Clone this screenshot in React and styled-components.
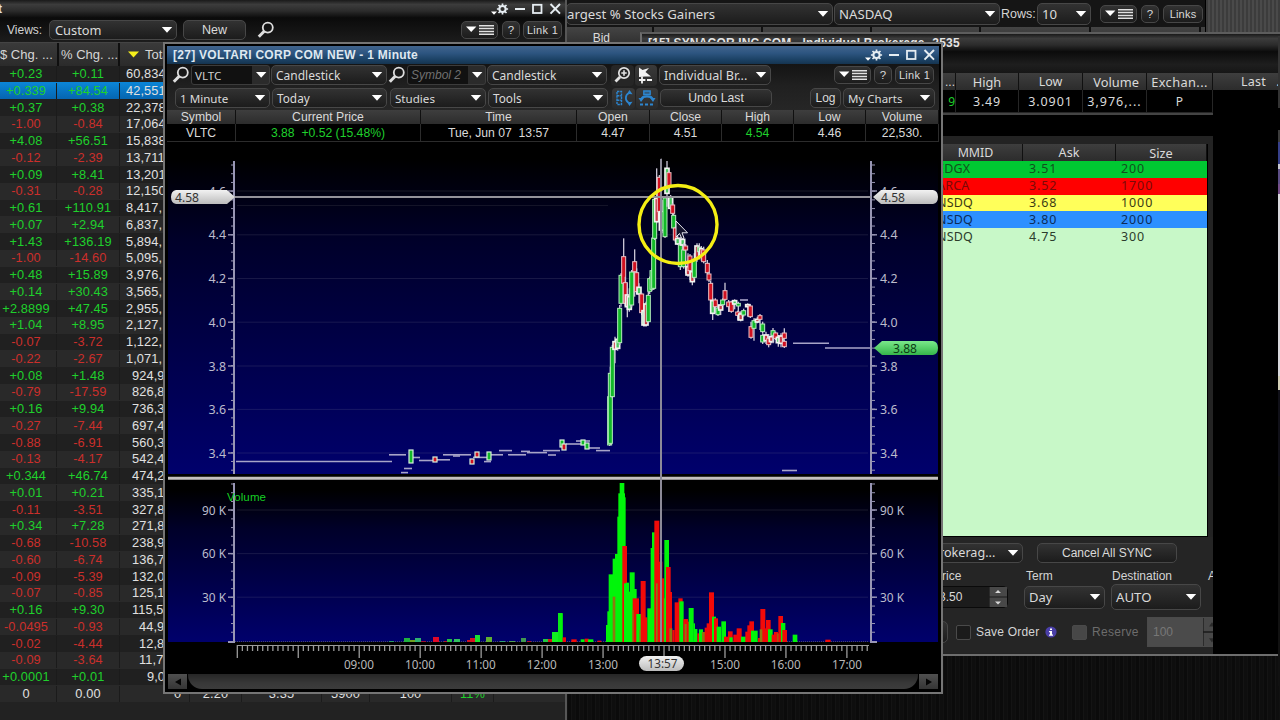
import React from "react";
import styled, { createGlobalStyle, css } from "styled-components";

const Global = createGlobalStyle`
  * { box-sizing: border-box; }
  body { margin: 0; background: #0c0c0c; overflow: hidden; }
`;

const ui = '"Noto Sans", "Open Sans", sans-serif';
const sans = '"Liberation Sans", Arial, sans-serif';

const Desktop = styled.div`
  position: relative;
  width: 1280px;
  height: 720px;
  overflow: hidden;
  background: repeating-linear-gradient(90deg, #0b0b0b 0 3px, #141414 3px 4px, #0e0e0e 4px 7px, #111 7px 8px);
  font-family: ${sans};
  font-size: 12px;
  color: #dcdcdc;
  white-space: nowrap;
`;

const Win = styled.section`
  position: absolute;
  left: ${(p) => p.$x}px;
  top: ${(p) => p.$y}px;
  width: ${(p) => p.$w}px;
  height: ${(p) => p.$h}px;
  overflow: hidden;
  display: flex;
  flex-direction: column;
`;

const ListWin = styled(Win)`
  background: #222;
  border-right: 2px solid #565656;
`;
const GainersWin = styled(Win)`
  background: #161616;
  border-right: 1px solid #000;
`;
const QuoteWin = styled(Win)`
  background: #000;
  border: 2px solid #6e6e6e;
  border-top-color: #5d5d5d;
`;
const ChartWin = styled(Win)`
  background: #000;
  border: 2px solid #757575;
  padding: 2px;
`;
const StripedDesk = styled(Win)`
  background: repeating-linear-gradient(90deg, #3c3c3c 0 2px, #4a4a4a 2px 4px);
`;

const TitleBar = styled.header`
  display: flex;
  align-items: center;
  justify-content: space-between;
  flex: none;
  height: ${(p) => p.$h || 18}px;
  padding: 0 3px 0 6px;
  font-weight: bold;
  font-size: 12px;
  letter-spacing: ${(p) => p.$ls || 0}px;
  color: ${(p) => (p.$active ? "#dfe8f0" : "#e4e4e4")};
  background: ${(p) =>
    p.$active
      ? "linear-gradient(#41648d, #2d5580 40%, #1c4265 75%, #153450)"
      : "linear-gradient(#1a1a1a, #3c3c3c 25%, #2c2c2c 60%, #0a0a0a)"};
`;

const Toolbar = styled.div`
  display: flex;
  align-items: center;
  flex: none;
  height: ${(p) => p.$h}px;
  padding-left: ${(p) => p.$pl || 0}px;
  background: ${(p) => p.$bg || "#191919"};
`;

const control = css`
  display: flex;
  align-items: center;
  flex: none;
  width: ${(p) => p.$w}px;
  height: ${(p) => p.$h || 20}px;
  margin-left: ${(p) => p.$ml || 0}px;
  border: 1px solid #474747;
  border-radius: 5px;
  background: linear-gradient(#323232, #1c1c1c);
  color: #dadada;
  letter-spacing: ${(p) => p.$ls || 0}px;
  font-size: ${(p) => p.$fs || 12}px;
  overflow: hidden;
`;
const SelectBox = styled.div`
  ${control}
  font-family: ${ui};
  justify-content: space-between;
  padding: 0 3px 0 ${(p) => (p.$pl === undefined ? 4 : p.$pl)}px;
`;
const Button = styled.div`
  ${control}
  font-family: ${sans};
  justify-content: center;
`;
const SymbolField = styled.div`
  ${control}
  border-radius: 3px;
  border-color: #3c3c3c;
  background: linear-gradient(90deg, #111 0 60px, #2b2b2b 60px);
  font-family: ${(p) => (p.$hint ? sans : ui)};
  font-style: ${(p) => (p.$hint ? "italic" : "normal")};
  color: ${(p) => (p.$hint ? "#707070" : "#d0d0d0")};
  justify-content: space-between;
  padding: 0 0 0 3px;
`;
const Label = styled.span`
  flex: none;
  width: ${(p) => p.$w}px;
  margin-left: ${(p) => p.$ml || 0}px;
  font-size: ${(p) => p.$fs || 12}px;
  letter-spacing: ${(p) => p.$ls || 0}px;
  color: ${(p) => p.$c || "#d4d4d4"};
`;
const Icon = styled.svg`
  display: block;
  flex: none;
  margin-left: ${(p) => p.$ml || 0}px;
`;

const Arrow = () => (
  <Icon width="12" height="8" viewBox="0 0 12 8">
    <path d="M0.8 1H11.2L6 6.8Z" fill="#fff" />
  </Icon>
);
const Select = ({ children, ...p }) => (
  <SelectBox {...p}>
    <span>{children}</span>
    <Arrow />
  </SelectBox>
);
const Search = ({ ml }) => (
  <Icon $ml={ml} width="18" height="18" viewBox="0 0 18 18" fill="none" stroke="#dedede">
    <circle cx="10.8" cy="6.6" r="5" strokeWidth="1.8" />
    <path d="M7.2 10.2L1.8 15.8" strokeWidth="3" />
  </Icon>
);
const MenuButton = ({ ml, h = 18 }) => (
  <Button $w={37} $h={h} $ml={ml}>
    <svg width="28" height="12" viewBox="0 0 28 12">
      <path d="M0 2.5H10.4L5.2 8Z" fill="#fff" />
      <path d="M13 1.8H28M13 4.6H28M13 7.4H28M13 10.2H28" stroke="#e2e2e2" strokeWidth="1.5" />
    </svg>
  </Button>
);
const WindowIcons = () => (
  <svg width="72" height="18" viewBox="0 0 72 18" fill="none" stroke="#e6edf2">
    <path d="M1 11.5H7L4 14.8Z" fill="#fff" stroke="none" />
    <circle cx="12.5" cy="9" r="3.1" strokeWidth="2" />
    <path
      d="M12.5 3.4V5.5M12.5 12.5V14.6M6.9 9H9M16 9H18.1M8.5 5L10 6.5M15 11.5L16.5 13M16.5 5L15 6.5M10 11.5L8.5 13"
      strokeWidth="1.7"
    />
    <path d="M25 9H35" strokeWidth="2" />
    <rect x="43" y="4.8" width="8.5" height="8.2" strokeWidth="1.8" />
    <path d="M60.5 4L70 13.6M70 4L60.5 13.6" strokeWidth="2" />
  </svg>
);

/* ---------- market list ---------- */
const ListHead = styled.div`
  display: flex;
  flex: none;
  height: 23.7px;
  background: linear-gradient(#3a3a3a, #2b2b2b);
  border-top: 1px solid #444;
`;
const ListHeadCell = styled.div`
  flex: none;
  width: ${(p) => p.$w}px;
  display: flex;
  align-items: center;
  gap: 6px;
  padding-left: ${(p) => p.$pl}px;
  border-right: 2px solid #0f0f0f;
  overflow: hidden;
  font-family: ${sans};
  font-size: 13px;
  color: #d6d6d6;
`;
const ListRow = styled.div`
  display: flex;
  align-items: center;
  flex: none;
  height: 16.757px;
  background: ${(p) => (p.$sel ? "linear-gradient(#0b86d8, #0565b0)" : p.$odd ? "#292929" : "#202020")};
  font-size: 12.8px;
  line-height: 16px;
  letter-spacing: 0.1px;
`;
const ListCell = styled.div`
  flex: none;
  width: ${(p) => p.$w}px;
  text-align: ${(p) => (p.$pl === undefined ? "center" : "left")};
  text-indent: ${(p) => p.$shift || 0}px;
  padding-left: ${(p) => p.$pl || 0}px;
  border-right: 1px solid #1b1b1b;
  color: ${(p) => (p.$dir === "up" ? "#1fd02c" : p.$dir === "down" ? "#cb2f2b" : "#e0e0e0")};
`;

const rows = [
  ["+0.23", "+0.11", "60,834"], ["+0.339", "+84.54", "42,551"], ["+0.37", "+0.38", "22,378"],
  ["-1.00", "-0.84", "17,064"], ["+4.08", "+56.51", "15,838"], ["-0.12", "-2.39", "13,711"],
  ["+0.09", "+8.41", "13,201"], ["-0.31", "-0.28", "12,150"], ["+0.61", "+110.91", "8,417,"],
  ["+0.07", "+2.94", "6,837,"], ["+1.43", "+136.19", "5,894,"], ["-1.00", "-14.60", "5,095,"],
  ["+0.48", "+15.89", "3,976,"], ["+0.14", "+30.43", "3,565,"], ["+2.8899", "+47.45", "2,955,"],
  ["+1.04", "+8.95", "2,127,"], ["-0.07", "-3.72", "1,122,"], ["-0.22", "-2.67", "1,071,"],
  ["+0.08", "+1.48", "924,9", 6], ["-0.79", "-17.59", "826,8", 6], ["+0.16", "+9.94", "736,3", 6],
  ["-0.27", "-7.44", "697,4", 6], ["-0.88", "-6.91", "560,3", 6], ["-0.13", "-4.17", "542,4", 6],
  ["+0.344", "+46.74", "474,2", 6], ["+0.01", "+0.21", "335,1", 6], ["-0.11", "-3.51", "327,8", 6],
  ["+0.34", "+7.28", "271,8", 6], ["-0.68", "-10.58", "238,9", 6], ["-0.60", "-6.74", "136,7", 6],
  ["-0.09", "-5.39", "132,0", 6], ["-0.07", "-0.85", "125,1", 6], ["+0.16", "+9.30", "115,5", 6],
  ["-0.0495", "-0.93", "44,9", 13], ["-0.02", "-4.44", "12,8", 13], ["-0.09", "-3.64", "11,7", 13],
  ["+0.0001", "+0.01", "9,0", 21],
];
const dir = (s) => (s[0] === "+" ? "up" : "down");

const MarketList = () => (
  <ListWin $x={0} $y={0} $w={567} $h={720}>
    <TitleBar $h={18}>
      <span style={{ marginLeft: -8 }}>t</span>
      <WindowIcons />
    </TitleBar>
    <Toolbar $h={24} $pl={7} $bg="linear-gradient(#0b0b0b, #1c1c1c)">
      <Label $w={36}>Views:</Label>
      <Select $w={128} $ml={6} $h={20} $fs={12.8} $pl={5}>Custom</Select>
      <Button $w={63} $ml={6} $h={20} $fs={12.5}>New</Button>
      <Search ml={11} />
      <MenuButton ml={186} />
      <Button $w={18} $h={18} $ml={4} $fs={11.5}>?</Button>
      <Button $w={39} $h={18} $ml={3} $fs={11} $ls={0.3}>Link 1</Button>
    </Toolbar>
    <ListHead>
      <ListHeadCell $w={59} $pl={-1}>$ Chg. ...</ListHeadCell>
      <ListHeadCell $w={61} $pl={2}>% Chg. ...</ListHeadCell>
      <ListHeadCell $w={447} $pl={8}>
        <svg width="11" height="7" viewBox="0 0 11 7"><path d="M0 0.5H11L5.5 6.5Z" fill="#f4ee1c" /></svg>
        Total Vol
      </ListHeadCell>
    </ListHead>
    {rows.map((r, i) => (
      <ListRow key={i} $sel={i === 1} $odd={i % 2 === 1}>
        <ListCell $w={57} $dir={dir(r[0])} $shift={-4}>{r[0]}</ListCell>
        <ListCell $w={63} $dir={dir(r[1])}>{r[1]}</ListCell>
        <ListCell $w={200} $pl={6 + (r[3] || 0)}>{r[2]}</ListCell>
      </ListRow>
    ))}
    <ListRow $odd>
      <ListCell $w={57} $shift={-4}>0</ListCell>
      <ListCell $w={63}>0.00</ListCell>
      <ListCell $w={70} $pl={54}>0</ListCell>
      <ListCell $w={52}>2.20</ListCell>
      <ListCell $w={80}>3.35</ListCell>
      <ListCell $w={48}>5900</ListCell>
      <ListCell $w={82}>100</ListCell>
      <ListCell $w={42} $dir="up">11%</ListCell>
    </ListRow>
  </ListWin>
);

/* ---------- gainers ---------- */
const HeadStrip = styled.div`
  display: flex;
  flex: none;
  height: 17px;
  background: linear-gradient(#444, #303030);
`;
const StripCell = styled.div`
  flex: none;
  width: ${(p) => p.$w}px;
  border-right: 2px solid #111;
  padding-top: 4px;
  padding-right: 42px;
  text-align: right;
`;
const Gainers = () => (
  <GainersWin $x={567} $y={0} $w={639} $h={400}>
    <Toolbar $h={27} $bg="#151515">
      <Select $w={267} $ml={-1} $h={22} $pl={0} $fs={13.2}>argest % Stocks Gainers</Select>
      <Select $w={166} $ml={1} $h={22} $fs={13.2}>NASDAQ</Select>
      <Label $w={35} $ml={1} $fs={12.5}>Rows:</Label>
      <Select $w={54} $ml={1} $h={22} $fs={13.2}>10</Select>
      <MenuButton ml={9} />
      <Button $w={18} $h={18} $ml={4} $fs={11.5}>?</Button>
      <Button $w={40} $h={18} $ml={4} $fs={11} $ls={0.2}>Links</Button>
    </Toolbar>
    <HeadStrip>
      <StripCell $w={87}>Bid</StripCell>
      <StripCell $w={109} /><StripCell $w={109} /><StripCell $w={109} /><StripCell $w={110} /><StripCell $w={110} />
    </HeadStrip>
  </GainersWin>
);

/* ---------- quote / level 2 ---------- */
const GridHead = styled.div`
  display: flex;
  flex: none;
  height: ${(p) => p.$h}px;
  background: linear-gradient(#3e3e3e, #2c2c2c);
`;
const GridVals = styled.div`
  display: flex;
  flex: none;
  height: ${(p) => p.$h}px;
  background: #000;
`;
const GridCell = styled.div`
  flex: none;
  width: ${(p) => p.$w}px;
  display: flex;
  align-items: center;
  justify-content: ${(p) => p.$j || "center"};
  border-right: 1px solid ${(p) => (p.$line ? p.$line : "#101010")};
  border-bottom: ${(p) => (p.$line ? `1px solid ${p.$line}` : "0")};
  font-family: ${(p) => (p.$ui ? ui : sans)};
  font-size: ${(p) => p.$fs || 12}px;
  letter-spacing: ${(p) => p.$ls || 0}px;
  padding-left: ${(p) => p.$pl || 0}px;
  color: ${(p) => (p.$up ? "#1fcf2c" : "#dadada")};
  white-space: pre;
`;
const QuoteBody = styled.div`
  flex: none;
  width: 571px;
  height: 541px;
  border-top: 2px solid #444;
  background: #232323;
`;
const BlackBand = styled.div`
  height: 21px;
  background: #000;
`;
const Level2 = styled.div`
  width: 566px;
  height: 393px;
  margin-top: 8px;
  border-right: 1px solid #000;
  border-bottom: 1px solid #000;
  background: #c8f8c8;
`;
const L2Row = styled.div`
  display: flex;
  align-items: center;
  height: 16.8px;
  padding-left: 295px;
  background: ${(p) => p.$bg};
  color: ${(p) => p.$fg};
  font-family: ${ui};
  font-size: 12.5px;
  line-height: 16px;
`;
const L2Cell = styled.span`
  flex: none;
  width: 92px;
  letter-spacing: ${(p) => (p.$name ? 0.2 : 0.9)}px;
`;
const Form = styled.div`
  height: 116px;
  display: flex;
  flex-direction: column;
  background: #252525;
  overflow: hidden;
`;
const FormRow = styled.div`
  display: flex;
  align-items: center;
  flex: none;
  height: ${(p) => p.$h}px;
  padding-left: ${(p) => p.$pl}px;
`;
const Spinner = styled.div`
  display: flex;
  justify-content: space-between;
  align-items: center;
  flex: none;
  width: ${(p) => p.$w}px;
  height: ${(p) => p.$h}px;
  padding-left: ${(p) => p.$pl}px;
  border: 1px solid ${(p) => (p.$off ? "#4a4a4a" : "#0a0a0a")};
  border-radius: ${(p) => (p.$off ? 0 : 5)}px;
  background: ${(p) => (p.$off ? "#4b4b4b" : "#1c1c1c")};
  color: ${(p) => (p.$off ? "#777" : "#dadada")};
`;
const Check = styled.div`
  flex: none;
  width: 15px;
  height: 15px;
  margin-left: ${(p) => p.$ml || 0}px;
  border: 1px solid #4a4a4a;
  border-radius: 2px;
  background: ${(p) => (p.$off ? "#474747" : "#1b1b1b")};
`;
const SpinArrows = ({ h, off }) => (
  <svg width="18" height={h} viewBox="0 0 18 20" preserveAspectRatio="none">
    <rect width="18" height="20" fill="#484848" />
    <path d="M0 10H18M0 0V20" stroke="#1a1a1a" strokeWidth="1.2" />
    <path d="M6 6H12L9 3ZM6 14.5H12L9 17.5Z" fill={off ? "#2a2a2a" : "#d8d8d8"} />
  </svg>
);

const l2 = [
  ["EDGX", "3.51", "200", "#00c832", "#12501c"],
  ["ARCA", "3.52", "1700", "#ff0000", "#7a0a08"],
  ["NSDQ", "3.68", "1000", "#ffff5a", "#3c3c14"],
  ["NSDQ", "3.80", "2000", "#2d90ff", "#0c2c58"],
  ["NSDQ", "4.75", "300", "#c8f8c8", "#2c3c2c"],
];

const Quote = () => (
  <QuoteWin $x={640} $y={32} $w={660} $h={624}>
    <TitleBar $h={18} $ls={0.17}>
      <span>[15] SYNACOR INC COM - Individual Brokerage -2535</span>
    </TitleBar>
    <Toolbar $h={21} $bg="linear-gradient(#0c0c0c, #1e1e1e 60%, #161616)" />
    <GridHead $h={17}>
      <GridCell $w={314} $j="flex-end">...</GridCell>
      <GridCell $w={63} $ui $fs={12.8}>High</GridCell>
      <GridCell $w={64} $ui $fs={12.5}>Low</GridCell>
      <GridCell $w={64} $ui $fs={12.8}>{" Volume"}</GridCell>
      <GridCell $w={66} $ui $fs={12.8} $ls={0.4}>Exchan...</GridCell>
      <GridCell $w={85} $ui $fs={12.5} $ls={0.2} $j="flex-start" $pl={28}>{"Last   ."}</GridCell>
    </GridHead>
    <GridVals $h={23}>
      <GridCell $w={314} $ui $j="flex-end" $up $line="#262626">9</GridCell>
      <GridCell $w={63} $ui $fs={12.5} $ls={0.8} $line="#262626">3.49</GridCell>
      <GridCell $w={64} $ui $fs={12.5} $ls={0.9} $line="#262626">3.0901</GridCell>
      <GridCell $w={64} $ui $fs={12.5} $ls={1} $line="#262626">3,976,...</GridCell>
      <GridCell $w={66} $ui $line="#262626">P</GridCell>
    </GridVals>
    <QuoteBody>
      <BlackBand />
      <Level2>
        <GridHead $h={17}>
          <GridCell $w={381} $ui $fs={12.4} $pl={287}>MMID</GridCell>
          <GridCell $w={93} $ui $fs={12.6}>Ask</GridCell>
          <GridCell $w={91} $ui $fs={12.8}>{"Size"}</GridCell>
        </GridHead>
        {l2.map((r, i) => (
          <L2Row key={i} $bg={r[3]} $fg={r[4]}>
            <L2Cell $name>{r[0]}</L2Cell>
            <L2Cell>{r[1]}</L2Cell>
            <L2Cell>{r[2]}</L2Cell>
          </L2Row>
        ))}
      </Level2>
      <Form>
        <FormRow $h={31} $pl={252}>
          <Select $w={129} $h={20} $pl={44} $fs={12.6}>rokerag...</Select>
          <Button $w={140} $h={20} $ml={14}>Cancel All SYNC</Button>
        </FormRow>
        <FormRow $h={15} $pl={292}>
          <Label $w={92}>Price</Label>
          <Label $w={86}>Term</Label>
          <Label $w={96}>Destination</Label>
          <Label $w={40}>Account</Label>
        </FormRow>
        <FormRow $h={28} $pl={284}>
          <Spinner $w={82} $h={22} $pl={12}>3.50<SpinArrows h={20} /></Spinner>
          <Select $w={81} $h={23} $ml={16} $fs={13}>Day</Select>
          <Select $w={90} $h={26} $ml={6} $fs={13.2}>AUTO</Select>
        </FormRow>
        <FormRow $h={42} $pl={285}>
          <Button $w={21} $h={22} />
          <Check $ml={8} />
          <Label $w={63} $ml={5} $ls={0.2}>Save Order</Label>
          <Icon $ml={6} width="12" height="12" viewBox="0 0 12 12">
            <circle cx="6" cy="6" r="5.6" fill="#4a3fa8" />
            <path d="M5 2.5H7V4H5ZM4 5H7V8.6H8V9.8H4V8.6H5V6.2H4Z" fill="#fff" />
          </Icon>
          <Check $off $ml={15} />
          <Label $w={55} $ml={5} $c="#6c6c6c" $ls={0.3}>Reserve</Label>
          <Spinner $off $w={75} $h={30} $pl={5}>100<SpinArrows h={28} off /></Spinner>
        </FormRow>
      </Form>
    </QuoteBody>
  </QuoteWin>
);

const EdgeSlice = styled(Win)`
  background: linear-gradient(#333 0 72px, #000 72px 94px, #3c3c3c 94px 106px, #37408a 106px 128px, #c9c9d2 128px 133px, #5d4f86 133px 148px, #77508a 148px 158px, #d8d8dc 158px 340px, #d4d0b8 340px 354px, #101018 354px 440px, #111 440px);
`;

/* ---------- chart ---------- */
const AXIS = "#9896b4";
const ticks = (from, to, step) => {
  const out = [];
  for (let v = from; v <= to + 0.01; v += step) out.push(v);
  return out;
};
const price = [["4.6", 191], ["4.4", 234.8], ["4.2", 278.5], ["4.0", 322.2], ["3.8", 366], ["3.6", 409.4], ["3.4", 453]];
const vol = [["90 K", 510], ["60 K", 553.6], ["30 K", 597.2]];
const times = [["09:00", 358.9], ["10:00", 420], ["11:00", 480.8], ["12:00", 541.8], ["13:00", 603], ["15:00", 725], ["16:00", 785.8], ["17:00", 847]];

/* centre, wick top, body top, body bottom, wick bottom, colour; tripled scale */
const candles = [
  [149, 700, 740, 885, 888, "g"], [151, 650, 670, 880, 885, "g"], [157, 585, 592, 740, 745, "g"], [165, 560, 575, 598, 640, "w"], [173, 560, 568, 595, 602, "w"],
  [179, 465, 475, 578, 585, "g"], [183, 370, 376, 460, 470, "g"], [191, 265, 320, 400, 405, "r"],
  [196, 380, 398, 460, 468, "r"], [202, 400, 435, 470, 502, "w"], [208, 415, 440, 478, 485, "w"],
  [215, 360, 366, 465, 472, "g"], [224, 298, 335, 365, 440, "r"], [230, 355, 368, 425, 432, "r"],
  [237, 400, 412, 432, 460, "w"], [245, 428, 432, 488, 495, "r"], [252, 465, 482, 525, 530, "w"],
  [258, 455, 462, 525, 530, "w"], [265, 425, 436, 515, 520, "g"], [269, 380, 386, 424, 432, "g"],
  [276, 355, 362, 418, 422, "g"], [281, 258, 264, 415, 418, "g"], [284, 140, 148, 265, 270, "g"],
  [290, 55, 145, 215, 220, "w"], [298, 75, 82, 185, 190, "r"], [304, 26, 185, 240, 300, "w"],
  [309, 150, 185, 240, 250, "g"], [315, 138, 144, 260, 264, "g"], [321, 33, 55, 130, 170, "w"],
  [327, 60, 68, 110, 124, "r"], [332, 135, 142, 175, 180, "w"], [338, 160, 165, 190, 200, "r"],
  [341, 190, 196, 234, 238, "g"], [346, 230, 234, 270, 275, "r"], [353, 255, 265, 282, 285, "w"],
  [361, 262, 285, 350, 360, "g"], [368, 262, 268, 285, 350, "w"], [371, 280, 300, 350, 356, "g"],
  [377, 282, 288, 300, 370, "r"], [384, 310, 350, 375, 380, "w"], [390, 312, 318, 362, 390, "r"],
  [397, 330, 365, 395, 406, "w"], [403, 310, 330, 382, 388, "g"], [411, 280, 288, 325, 335, "w"],
  [418, 280, 292, 305, 328, "g"], [424, 288, 296, 318, 332, "w"], [431, 290, 300, 335, 340, "r"],
  [442, 330, 340, 368, 372, "r"], [447, 365, 372, 390, 396, "r"], [452, 392, 400, 450, 470, "r"],
  [458, 445, 452, 490, 510, "w"], [466, 445, 450, 470, 490, "r"], [474, 468, 474, 494, 498, "g"],
  [482, 460, 465, 480, 495, "w"], [488, 445, 450, 464, 468, "g"], [495, 398, 422, 448, 452, "r"],
  [506, 450, 456, 470, 486, "r"], [514, 452, 456, 484, 488, "r"], [524, 448, 452, 462, 478, "w"],
  [535, 455, 460, 468, 500, "g"], [533, 482, 486, 496, 512, "r"], [542, 484, 492, 510, 514, "w"],
  [551, 476, 482, 495, 500, "g"], [563, 460, 464, 470, 500, "w"], [571, 462, 468, 500, 504, "r"],
  [573, 515, 530, 562, 566, "r"], [582, 505, 512, 535, 572, "g"], [592, 500, 508, 516, 520, "w"],
  [600, 492, 497, 508, 540, "r"], [608, 515, 522, 545, 550, "g"], [608, 550, 556, 576, 582, "g"],
  [618, 545, 555, 572, 582, "w"], [626, 552, 566, 584, 592, "r"], [634, 550, 560, 575, 580, "w"],
  [639, 534, 542, 556, 580, "g"], [647, 545, 549, 566, 570, "r"], [655, 555, 562, 578, 590, "w"],
  [663, 550, 558, 580, 592, "w"], [673, 535, 549, 565, 568, "r"], [673, 568, 574, 590, 594, "r"],
];
const fills = { g: "#12b828", r: "#d01020" };

/* left, top, width, colour; tripled scale, baseline 605 */
const bars = [
  [0, 520, 8, "g"], [8, 592, 10, "r"], [34, 598, 16, "r"], [62, 598, 12, "g"], [74, 596, 12, "r"], [84, 598, 16, "g"], [112, 602, 12, "r"],
  [138, 555, 8, "g"], [142, 514, 8, "g"], [146, 403, 14, "g"], [158, 356, 12, "g"], [165, 342, 12, "g"],
  [172, 230, 10, "g"], [175, 160, 20, "g"], [179, 129, 14, "g"], [192, 172, 5, "g"], [158, 470, 8, "o"], [187, 318, 14, "r"],
  [192, 430, 13, "g"], [198, 428, 9, "g"], [204, 455, 22, "g"], [209, 397, 15, "g"], [222, 447, 8, "g"],
  [218, 475, 19, "r"], [216, 510, 5, "o"], [229, 522, 14, "g"], [242, 423, 15, "r"], [238, 570, 5, "o"], [255, 532, 7, "r"],
  [262, 505, 20, "g"], [272, 324, 10, "g"], [276, 277, 12, "g"], [283, 242, 15, "r"], [288, 430, 5, "o"],
  [297, 365, 10, "r"], [305, 415, 7, "r"], [311, 475, 5, "o"], [313, 300, 14, "g"], [318, 381, 14, "r"], [328, 456, 8, "r"],
  [328, 565, 9, "o"], [337, 570, 7, "r"], [344, 487, 14, "r"], [355, 475, 13, "r"], [358, 484, 13, "g"], [370, 537, 14, "r"],
  [374, 552, 6, "o"], [382, 545, 5, "r"], [386, 504, 15, "g"], [400, 550, 5, "g"], [405, 567, 7, "g"], [412, 580, 6, "r"], [417, 568, 12, "g"],
  [426, 576, 12, "o"], [434, 563, 8, "r"], [440, 550, 8, "r"], [447, 457, 15, "r"], [456, 530, 12, "g"], [462, 535, 12, "r"],
  [470, 560, 13, "g"], [484, 544, 14, "g"], [492, 590, 12, "r"], [504, 574, 14, "r"], [508, 592, 10, "g"], [520, 584, 12, "r"],
  [530, 565, 15, "r"], [543, 590, 15, "g"], [556, 575, 8, "r"], [562, 556, 8, "r"], [568, 544, 14, "r"], [573, 572, 20, "g"],
  [594, 594, 6, "r"], [601, 507, 15, "r"], [599, 568, 8, "o"], [615, 565, 5, "r"], [618, 540, 14, "r"], [624, 568, 14, "g"], [635, 584, 10, "r"],
  [642, 576, 12, "r"], [652, 580, 8, "o"], [655, 528, 14, "r"], [663, 549, 13, "g"], [667, 570, 14, "r"], [698, 584, 14, "g"], [796, 599, 16, "r"],
];
const barFill = { g: "#00f50a", r: "#f20a08", o: "#8c7a10" };

/* left, width, height, colour of the small morning bars */
const early = [
  [389, 5, 1, "#2a9a60"], [404, 6, 4, "#20b040"], [410, 5, 2, "#6fa020"], [415, 6, 4, "#30b070"], [421, 5, 1, "#a01030"],
  [433, 6, 5, "#e00828"], [444, 3, 1, "#b01030"], [447, 5, 3, "#20c040"], [454, 6, 3, "#30c060"], [467, 3, 2, "#d01020"],
  [470, 5, 4, "#d81020"], [475, 5, 7, "#18e030"], [486, 6, 5, "#60b030"], [500, 5, 1, "#30a070"], [509, 6, 1, "#50a050"],
  [521, 5, 4, "#409850"], [527, 4, 1, "#b01030"], [543, 5, 3, "#20c840"], [548, 4, 3, "#d01818"], [552, 6, 10, "#10f020"], [558, 4.5, 29, "#08e818"],
];
const dashes = [
  [236, 392, 461.5], [389, 406, 454.8], [404, 412, 468.5], [401, 408, 472.6], [412, 420, 457.5], [419, 434, 460.5],
  [437, 450, 459.8], [443, 471, 454.8], [453, 460, 456], [473, 488, 457.4], [484, 491, 461.6], [490, 503, 454.8], [499, 512, 450.6],
  [508, 526, 454.8], [521, 530, 451.4], [527, 547, 452.6], [543, 560, 450.6], [548, 556, 455], [566, 582, 444], [576, 590, 441],
  [586, 600, 448], [596, 610, 450.6], [740, 748, 300], [793, 829, 343.3], [825, 870, 348], [782, 797, 470.5],
];
const small = [[411, 450, 13, "g"], [435, 457, 5, "r"], [472, 459, 5, "r"], [477, 452, 5, "r"], [489, 452, 8, "g"], [562, 440, 7, "g"], [564, 444, 6, "r"], [583, 440, 5, "g"], [587, 443, 6, "g"]];

const Chart = () => (
  <Icon as="svg" width="772" height="531" viewBox="167 142 772 531" fontFamily={ui} fontSize="12">
    <defs>
      <linearGradient id="pane" x1="0" y1="0" x2="0" y2="1">
        <stop offset="0.05" stopColor="#000" />
        <stop offset="0.3" stopColor="#00002a" />
        <stop offset="1" stopColor="#00006c" />
      </linearGradient>
      <linearGradient id="tag" x1="0" y1="0" x2="0" y2="1">
        <stop offset="0" stopColor="#f2f2f2" /><stop offset="1" stopColor="#bcbcbc" />
      </linearGradient>
      <linearGradient id="tagG" x1="0" y1="0" x2="0" y2="1">
        <stop offset="0" stopColor="#7ae88a" /><stop offset="1" stopColor="#35b64a" />
      </linearGradient>
    </defs>
    <rect x="167" y="142" width="772" height="531" fill="#000" />
    <rect x="168" y="142" width="770" height="332" fill="url(#pane)" />
    <rect x="168" y="482" width="770" height="160" fill="url(#pane)" />
    {[...price, ...vol].map(([t, y]) => (
      <path key={t} d={`M237 ${y}H868`} stroke="#9090a0" strokeOpacity="0.17" />
    ))}
    <path d="M237 205.5H608" stroke="#888" strokeOpacity="0.15" />
    <path d="M168 478.3H938" stroke="#c4c0c0" strokeWidth="3" />
    {[234, 871].map((x, k) => {
      const s = k ? 1 : -1;
      return (
        <g key={x} stroke={AXIS}>
          <path d={`M${x} 161V474M${x} 483V642h${s * 6}`} strokeWidth="2" fill="none" />
          {ticks(165, 473, 8.72).map((y) => <path key={y} d={`M${x} ${y}h${k ? 4 : -3}`} />)}
          {ticks(484, 640, 8.72).map((y) => <path key={y} d={`M${x} ${y}h${k ? 4 : -3}`} />)}
          {[...price, ...vol].map(([t, y]) => (
            <g key={t}>
              <path d={`M${x} ${y}h${s * 6}`} strokeWidth="1.4" />
              <text x={k ? 880 : 226} y={y + 4.5} textAnchor={k ? "start" : "end"} fill="#bcbccc" stroke="none" textLength={t.length > 3 ? 24 : 17.5} lengthAdjust="spacingAndGlyphs">{t}</text>
            </g>
          ))}
        </g>
      );
    })}
    <g stroke="#a8a4c8" strokeWidth="1.6">
      {dashes.map(([a, b, y]) => <path key={`${a}-${y}`} d={`M${a} ${y}H${b}`} />)}
    </g>
    {small.map(([x, y, h, c]) => (
      <rect key={x} x={x - 2} y={y} width="4" height={h} fill={fills[c]} stroke="#d8f0dc" strokeWidth="1.2" />
    ))}
    <g transform="translate(560 150) scale(0.33333)">
      {candles.map(([x, a, b, c, d, k], i) => (
        <g key={i}>
          <path d={`M${x} ${a}V${d}`} stroke="#c8c4d4" strokeWidth="4" />
          <rect x={x - 6} y={b} width="12" height={c - b} fill={k === "w" ? (i % 2 ? "#c83a48" : "#48c860") : fills[k]} stroke={k === "r" ? "#ecc0c4" : k === "g" ? "#b4ecbc" : "#f0f4f0"} strokeWidth={k === "w" ? 5 : 3} />
        </g>
      ))}
    </g>
    <path d="M235 641.5H868" stroke="#44446a" strokeDasharray="1 1" />
    {early.map(([x, w, h, c]) => <rect key={x} x={x} y={642 - h} width={w} height={h} fill={c} />)}
    <g transform="translate(560 440) scale(0.33333)">
      {bars.map(([x, y, w, c], i) => <rect key={i} x={x} y={y} width={w} height={606 - y} fill={barFill[c]} />)}
    </g>
    <text x="227" y="501" fill="#16cf22" fontFamily={sans} fontSize="11.5" textLength="39">Volume</text>
    <path d="M661 159V642" stroke="#8c8a98" strokeWidth="2" />
    <path d="M234 197H871" stroke="#94929a" strokeWidth="2" />

    <g stroke="#9c9c9c">
      <path d="M237 645.5H869" />
      {ticks(0, 124, 1).map((n) => (
        <path key={n} d={`M${237.3 + n * 5.08} 645V${n % 12 ? 651 : 658}`} strokeWidth="1.3" />
      ))}
    </g>
    {times.map(([t, x]) => (
      <text key={t} x={x} y="668.5" textAnchor="middle" fill="#b8b8b8" textLength="30" lengthAdjust="spacingAndGlyphs">{t}</text>
    ))}
    <rect x="639" y="656" width="45" height="15" rx="7.5" fill="url(#tag)" />
    <text x="662.5" y="668" textAnchor="middle" fill="#333" textLength="30" lengthAdjust="spacingAndGlyphs">13:57</text>

    <path d="M176 190H227L235 197L227 204H176Q171 203 171 197Q171 191 176 190Z" fill="url(#tag)" />
    <text x="175" y="201.5" fill="#333" textLength="24" lengthAdjust="spacingAndGlyphs">4.58</text>
    <path d="M933 190H881L873 197L881 204H933Q938 203 938 197Q938 191 933 190Z" fill="url(#tag)" />
    <text x="881" y="201.5" fill="#333" textLength="24" lengthAdjust="spacingAndGlyphs">4.58</text>
    <path d="M933 341H882L874 348L882 355H933Q938 354 938 348Q938 342 933 341Z" fill="url(#tagG)" />
    <text x="893" y="352.5" fill="#0c3c14" textLength="24" lengthAdjust="spacingAndGlyphs">3.88</text>

    <circle cx="678" cy="224.5" r="39" fill="none" stroke="#f4ee14" strokeWidth="3.4" />
    <path d="M676 221V237L679.5 233.5L682 239L684 238L682 232.8H687.5Z" fill="#14142c" stroke="#e8e8f0" strokeWidth="1" />
  </Icon>
);

const ScrollBar = styled.div`
  display: flex;
  align-items: stretch;
  flex: none;
  height: 17px;
  padding: 1px;
  background: #000;
`;
const ScrollTrack = styled.div`
  flex: 1;
  margin: 0 1px;
  border-radius: 0 0 14px 14px;
  background: linear-gradient(#262626, #383838 60%, #3c3c3c);
`;
const ScrollButton = styled.div`
  width: 19px;
  display: flex;
  align-items: center;
  justify-content: center;
  background: linear-gradient(#505050, #353535);
`;
const ToolIcon = styled.div`
  display: flex;
  align-items: center;
  justify-content: center;
  flex: none;
  width: ${(p) => p.$w}px;
  height: 21px;
  margin-left: ${(p) => p.$ml || 0}px;
  border-radius: 4px;
  background: ${(p) => (p.$on ? "linear-gradient(#3a3a3a, #2a2a2a)" : "#262626")};
`;

const cols = [69, 185, 156, 73, 72, 72, 72, 73];
const heads = ["Symbol", "Current Price", "Time", "Open", "Close", "High", "Low", "Volume"];
const vals = ["VLTC", "3.88  +0.52 (15.48%)", "Tue, Jun 07  13:57", "4.47", "4.51", "4.54", "4.46", "22,530."];

const ChartWindow = () => (
  <ChartWin $x={163} $y={42} $w={780} $h={652}>
    <TitleBar $active $ls={0.27}>
      <span>[27] VOLTARI CORP COM NEW - 1 Minute</span>
      <WindowIcons />
    </TitleBar>
    <Toolbar $h={22} $pl={5} $bg="linear-gradient(#141414, #202020)">
      <Search ml={0} />
      <SymbolField $w={79} $ml={1} $fs={11.6}><span>VLTC</span><Icon width="14" height="8" viewBox="0 0 14 8"><path d="M1 1H11.4L6.2 6.8Z" fill="#fff" /></Icon></SymbolField>
      <Select $w={116} $ml={1}>Candlestick</Select>
      <Search ml={1} />
      <SymbolField $w={79} $ml={1} $hint $fs={12}><span>Symbol 2</span><Icon width="14" height="8" viewBox="0 0 14 8"><path d="M1 1H11.4L6.2 6.8Z" fill="#fff" /></Icon></SymbolField>
      <Select $w={120} $ml={1}>Candlestick</Select>
      <ToolIcon $w={23} $ml={4}>
        <svg width="18" height="18" viewBox="0 0 18 18" fill="none" stroke="#e2e2e2">
          <circle cx="10" cy="7" r="5.2" strokeWidth="1.7" />
          <path d="M6 11L1.5 15.5" strokeWidth="2.8" />
          <path d="M7.3 7H12.7M10 4.3V9.7" strokeWidth="1.6" />
        </svg>
      </ToolIcon>
      <ToolIcon $w={22} $ml={1} $on>
        <svg width="18" height="18" viewBox="0 0 18 18">
          <path d="M2 1.5L5.5 4L12 2L8.5 6L14 10.5H8L2 11Z" fill="#f2f2f2" />
          <path d="M5 10.5V17.5M2 14H8.4M10 14H15" stroke="#f2f2f2" strokeWidth="1.8" />
        </svg>
      </ToolIcon>
      <Select $w={112} $ml={2} $fs={12.6}>Individual Br...</Select>
      <MenuButton ml={63} />
      <Button $w={18} $h={18} $ml={3} $fs={11.5}>?</Button>
      <Button $w={39} $h={18} $ml={3} $fs={11} $ls={0.3}>Link 1</Button>
    </Toolbar>
    <Toolbar $h={24} $pl={8} $bg="linear-gradient(#202020, #262626)">
      <Select $w={95} $fs={11.6}>1 Minute</Select>
      <Select $w={115} $ml={2} $fs={11.8}>Today</Select>
      <Select $w={96} $ml={3} $fs={11.6}>Studies</Select>
      <Select $w={120} $ml={2} $fs={11.8}>Tools</Select>
      <ToolIcon $w={23} $ml={4} $on>
        <svg width="18" height="18" viewBox="0 0 18 18" fill="none" stroke="#2c86d0" strokeWidth="1.4">
          <path d="M2 2.5H6.5V15.5H2ZM2 6.8H6.5M2 11.2H6.5" strokeDasharray="2.4 0.8" />
          <path d="M13.5 4.5C10 6 10 12 13.5 13.5" strokeWidth="1.8" />
          <path d="M12 4.8L14.5 1L17.5 5.2ZM12 13.2L14.5 17L17.5 12.8Z" fill="#2c86d0" stroke="none" />
        </svg>
      </ToolIcon>
      <ToolIcon $w={22} $ml={1} $on>
        <svg width="18" height="18" viewBox="0 0 18 18" fill="none" stroke="#2c86d0" strokeWidth="1.4">
          <path d="M3.5 10C4.5 6.5 13.5 6.5 14.5 10" strokeWidth="2.2" />
          <path d="M5.8 2H12.2V5.5H5.8Z" fill="#2c86d0" fillOpacity="0.45" />
          <path d="M0.5 9H6L3 13ZM12 9H17.5L15 13Z" fill="#2c86d0" stroke="none" />
          <path d="M2 15.5H16" strokeDasharray="3 2" strokeWidth="2" />
        </svg>
      </ToolIcon>
      <Button $w={112} $ml={2} $h={18} $fs={12.2}>Undo Last</Button>
      <Button $w={31} $ml={38}>Log</Button>
      <Select $w={92} $ml={2} $fs={11.5}>My Charts</Select>
    </Toolbar>
    <GridHead $h={14}>
      {heads.map((h, i) => <GridCell key={h} $w={cols[i]} $fs={12.2}>{h}</GridCell>)}
    </GridHead>
    <GridVals $h={18}>
      {vals.map((v, i) => <GridCell key={i} $w={cols[i]} $fs={12.2} $up={i === 1 || i === 5} $line="#2c2c2c">{v}</GridCell>)}
    </GridVals>
    <Chart />
    <ScrollBar>
      <ScrollButton><svg width="8" height="8"><path d="M7 0.5V7.5L1 4Z" fill="#050505" /></svg></ScrollButton>
      <ScrollTrack />
      <ScrollButton><svg width="8" height="8"><path d="M1 0.5V7.5L7 4Z" fill="#050505" /></svg></ScrollButton>
    </ScrollBar>
  </ChartWin>
);

export default function App() {
  return (
    <Desktop>
      <Global />
      <StripedDesk $x={1206} $y={0} $w={74} $h={32} />
      <MarketList />
      <Gainers />
      <Quote />
      <EdgeSlice $x={1278} $y={36} $w={2} $h={650} />
      <ChartWindow />
    </Desktop>
  );
}
